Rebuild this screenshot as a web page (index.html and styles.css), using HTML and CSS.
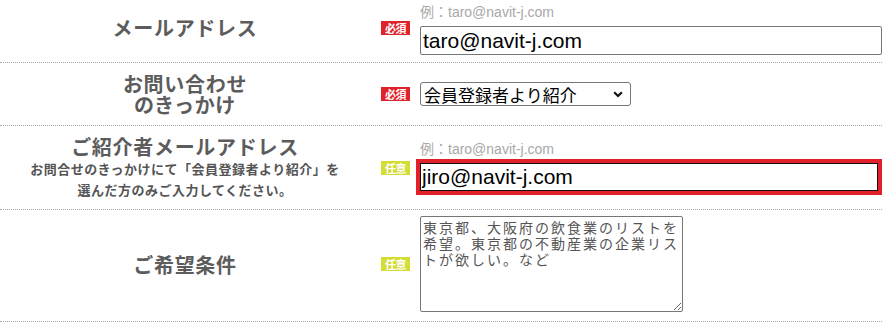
FILE: index.html
```html
<!DOCTYPE html>
<html lang="ja">
<head>
<meta charset="utf-8">
<title>お問い合わせフォーム</title>
<link rel="stylesheet" href="styles.css">
</head>
<body>
<div class="form">
  <div class="row row-email">
    <div class="label"><span class="title">メールアドレス</span></div>
    <div class="badge-col"><span class="badge badge-req">必須</span></div>
    <div class="field">
      <div class="hint">例：taro@navit-j.com</div>
      <input class="text-input" type="text" value="taro@navit-j.com">
    </div>
  </div>
  <div class="row row-select">
    <div class="label"><span class="title title-multi">お問い合わせ<br>のきっかけ</span></div>
    <div class="badge-col"><span class="badge badge-req">必須</span></div>
    <div class="field">
      <div class="select-wrap">
        <select class="select">
          <option>会員登録者より紹介</option>
        </select>
        <svg class="chevron" width="10" height="7" viewBox="0 0 10 7"><path d="M1.2 1.2 L5 5 L8.8 1.2" fill="none" stroke="#111" stroke-width="2.2"/></svg>
      </div>
    </div>
  </div>
  <div class="row row-ref">
    <div class="label">
      <div class="title title-ref">ご紹介者メールアドレス</div>
      <div class="note">お問合せのきっかけにて「会員登録者より紹介」を<br>選んだ方のみご入力してください。</div>
    </div>
    <div class="badge-col"><span class="badge badge-opt">任意</span></div>
    <div class="field">
      <div class="hint hint-ref">例：taro@navit-j.com</div>
      <div class="highlight">
        <input class="text-input text-input-focus" type="text" value="jiro@navit-j.com" autofocus>
      </div>
    </div>
  </div>
  <div class="row row-wish">
    <div class="label"><span class="title">ご希望条件</span></div>
    <div class="badge-col"><span class="badge badge-opt">任意</span></div>
    <div class="field">
      <textarea class="textarea">東京都、大阪府の飲食業のリストを希望。東京都の不動産業の企業リストが欲しい。など</textarea>
    </div>
  </div>
</div>
</body>
</html>
```

FILE: styles.css
```css
html, body {
  margin: 0;
  padding: 0;
  background: #fff;
}

body {
  font-family: "Noto Sans CJK JP", "Noto Sans", sans-serif;
  color: #595959;
}

.form {
  width: 882px;
}

.row {
  display: flex;
  align-items: center;
  border-bottom: 1px dotted #a9a9a9;
}

.row-email {
  padding: 0 0 7px;
}

.row-select {
  padding: 10px 0;
}

.row-ref {
  padding: 9px 0;
}

.row-wish {
  padding: 6px 0 9px;
}

.label {
  width: 370px;
  flex: none;
  text-align: center;
}

.title {
  display: block;
  font-size: 20px;
  line-height: 21px;
  font-weight: 700;
  letter-spacing: 0.7px;
  color: #5c5c5c;
}

.title-ref {
  line-height: 23px;
}

.note {
  font-size: 13px;
  line-height: 21px;
  font-weight: 700;
  letter-spacing: 0.5px;
  color: #555;
}

.badge-col {
  width: 50px;
  flex: none;
  box-sizing: border-box;
  padding-left: 11px;
  display: flex;
  align-items: center;
}

.badge {
  display: inline-block;
  width: 29px;
  height: 14px;
  line-height: 14px;
  text-align: center;
  font-size: 11px;
  font-weight: 700;
  color: #fff;
  letter-spacing: -0.5px;
}

.badge-req {
  background: #e0222b;
}

.badge-opt {
  background: #d4dc36;
}

.field {
  flex: 1;
  min-width: 0;
}

.hint {
  font-family: "Liberation Sans", "Noto Sans CJK JP", sans-serif;
  font-size: 14px;
  line-height: 20px;
  padding-top: 2px;
  margin-bottom: 4px;
  color: #a8a8a8;
}

.hint-ref {
  padding-top: 0;
  line-height: 18px;
  margin-bottom: 1px;
}

.text-input {
  display: block;
  box-sizing: border-box;
  width: 100%;
  height: 29px;
  margin: 0;
  padding: 0 2px;
  border: 1px solid #767676;
  border-radius: 2px;
  font-family: "Liberation Sans", "Noto Sans CJK JP", sans-serif;
  font-size: 21px;
  color: #000;
  background: #fff;
}

.highlight {
  margin-left: -4px;
  border: 4px solid #e3202a;
}

.text-input-focus {
  height: 28px;
  border: 1px solid #111;
  border-radius: 0;
  padding: 0 1px;
  outline: none;
}

.select-wrap {
  position: relative;
  display: inline-block;
  vertical-align: top;
}

.select {
  appearance: none;
  -webkit-appearance: none;
  display: block;
  box-sizing: border-box;
  width: 211px;
  height: 24px;
  margin: 0;
  padding: 1px 0 0 3px;
  border: 1px solid #767676;
  border-radius: 3px;
  background: #fff;
  font-family: "Noto Sans CJK JP", sans-serif;
  font-size: 17px;
  line-height: 22px;
  color: #000;
}

.chevron {
  position: absolute;
  right: 8px;
  top: 9px;
  pointer-events: none;
}

.textarea {
  display: block;
  box-sizing: border-box;
  width: 263px;
  height: 96px;
  margin: 0;
  padding: 2px;
  border: 1px solid #767676;
  border-radius: 2px;
  font-family: "Noto Sans CJK JP", sans-serif;
  font-size: 14px;
  letter-spacing: 2px;
  line-height: 16px;
  color: #555;
  resize: vertical;
  overflow: hidden;
}
```
